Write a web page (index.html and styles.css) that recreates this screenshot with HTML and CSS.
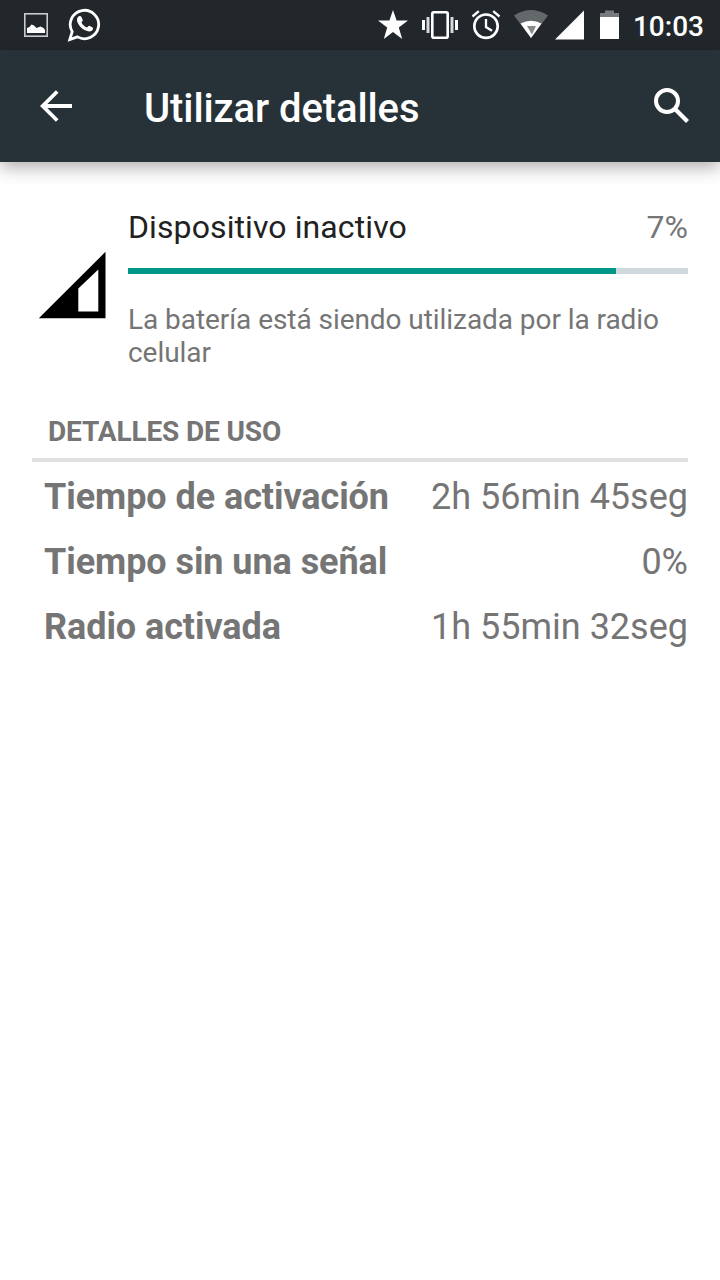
FILE: index.html
```html
<!DOCTYPE html>
<html lang="es">
<head>
    <meta charset="UTF-8">
    <meta name="viewport" content="width=device-width, initial-scale=1.0">
    <title>Utilizar detalles</title>
    <link rel="stylesheet" href="styles.css">
</head>
<body>
    <div class="status-bar">
        <div class="notifications">
            <svg width="24" height="50" viewBox="0 0 24 50">
                <rect x="0.8" y="13.8" width="22.4" height="22.4" fill="none" stroke="#c9cccb" stroke-width="1.6"/>
                <path d="M3 33v-5l2.500-1 2-2.500 2.500 1 2.500 2.500 4-1.500 3 1.500 1.500 2v3z" fill="#fff"/>
            </svg>
            <svg width="34" height="50" viewBox="0 0 34 50">
                <path d="M2.800 39.500l2.400-7.800A14.200 14.200 0 1 1 10.500 36.900z" fill="none" stroke="#fff" stroke-width="2.800"/>
                <path d="M10.800 17.200c1-1.400 2.900-1.600 3.500-.5l1.400 3c.4 1-.8 2-1.200 2.700 1.200 2.500 3.100 4 5.500 5.100.8-.7 1.500-2 2.400-1.700l3.200 1.600c1 .6.300 2.500-.8 3.300-1.800 1.300-4.200.8-6.700-.4-3.300-1.600-5.800-4.300-7.300-7.300-1-2-1.200-4.200 0-5.800z" fill="#fff"/>
            </svg>
        </div>
        <div class="system-icons">
            <svg class="star" width="30" height="50" viewBox="0 0 30 50">
                <path d="M15 10l3.600 10.500H30l-9.200 6.900L24.200 39 15 32 5.800 39l3.400-11.600L0 20.500h11.400z" fill="#fff"/>
            </svg>
            <svg class="vibrate" width="36" height="50" viewBox="0 0 36 50">
                <rect x="10.300" y="12.300" width="15.400" height="25.400" rx="1.500" fill="none" stroke="#fff" stroke-width="2.600"/>
                <path d="M0 20h3v10H0zM33 20h3v10h-3z" fill="#fff"/>
                <path d="M4.500 17h3v16h-3zM28.500 17h3v16h-3z" fill="#d6d8d9"/>
            </svg>
            <svg class="alarm" width="30" height="50" viewBox="0 0 30 50">
                <circle cx="15" cy="26.200" r="11.700" fill="none" stroke="#fff" stroke-width="2.600"/>
                <path d="M15 19v8l6 3.700M1.500 16.500l6.300-5.300M28.500 16.500l-6.300-5.300" fill="none" stroke="#fff" stroke-width="2.300"/>
            </svg>
            <svg class="wifi" width="34" height="50" viewBox="0 0 34 50">
                <path d="M0 15.500Q17 4.500 34 15.500L17 38z" fill="#63686b"/>
                <path d="M6.500 23.500q10.500-5.500 21 0L17 38z" fill="#fff"/>
                <path d="M13 26h9l-4 8.500z" fill="#85898b"/>
            </svg>
            <svg class="signal" width="30" height="50" viewBox="0 0 30 50">
                <path d="M0 39.500L29 10.500v29z" fill="#fff"/>
            </svg>
            <svg class="battery" width="19" height="50" viewBox="0 0 19 50">
                <path d="M5 10.500h9V13h5v5H0v-5h5z" fill="#777b7d"/>
                <path d="M0 17h19v22H0z" fill="#fff"/>
            </svg>
            <span class="clock">10:03</span>
        </div>
    </div>

    <header class="app-bar">
        <svg width="32" height="32" viewBox="0 0 32 32">
            <path d="M32 16H3M17.200 1.500L2.700 16l14.500 14.500" fill="none" stroke="#fff" stroke-width="3.800"/>
        </svg>
        <h1>Utilizar detalles</h1>
        <svg width="36" height="36" viewBox="0 0 36 36">
            <circle cx="13" cy="13" r="11" fill="none" stroke="#fff" stroke-width="4"/>
            <path d="M21.500 21.500l12 12" stroke="#fff" stroke-width="4.200"/>
        </svg>
    </header>

    <main>
        <section class="summary">
            <svg class="cell-icon" width="68" height="68" viewBox="0 0 68 68">
                <path d="M.8 67.300L67.500.8v66.500zM40.300 60.500h20V18.500L40.300 37.500z" fill="#000" fill-rule="evenodd"/>
            </svg>
            <div class="summary-info">
                <div class="summary-title">
                    <h2>Dispositivo inactivo</h2>
                    <span>7%</span>
                </div>
                <div class="progress">
                    <div class="progress-fill" style="width: 87.2%"></div>
                </div>
                <p>La batería está siendo utilizada por la radio celular</p>
            </div>
        </section>

        <section class="details">
            <h3>DETALLES DE USO</h3>
            <dl>
                <div class="row"><dt>Tiempo de activación</dt><dd>2h 56min 45seg</dd></div>
                <div class="row"><dt>Tiempo sin una señal</dt><dd>0%</dd></div>
                <div class="row"><dt>Radio activada</dt><dd>1h 55min 32seg</dd></div>
            </dl>
        </section>
    </main>
</body>
</html>
```
FILE: styles.css
```css
* {
    box-sizing: border-box;
}

body {
    margin: 0;
    min-height: 100vh;
    font-family: Roboto, sans-serif;
    background: #fff;
    color: #757575;
}

h1, h2, h3, p, dl, dt, dd {
    margin: 0;
}

svg {
    display: block;
    flex-shrink: 0;
}

/* Status bar */
.status-bar {
    display: flex;
    justify-content: space-between;
    height: 50px;
    padding: 0 16px 0 24px;
    background: #21272b;
}

.notifications,
.system-icons {
    display: flex;
}

.notifications {
    gap: 19px;
}

.star {
    margin-right: 14px;
}

.vibrate {
    margin-right: 13px;
}

.alarm {
    margin-right: 13px;
}

.wifi {
    margin-right: 7px;
}

.signal {
    margin-right: 15px;
}

.battery {
    margin-right: 14px;
}

.clock {
    font-size: 28px;
    font-weight: 500;
    line-height: 53px;
    color: #fff;
}

/* App bar */
.app-bar {
    display: flex;
    align-items: center;
    height: 112px;
    padding: 0 30px 0 40px;
    background: #263238;
    box-shadow: 0 6px 16px rgba(0, 0, 0, 0.3);
}

.app-bar h1 {
    flex: 1;
    padding: 6px 0 0 72px;
    font-size: 40px;
    font-weight: 500;
    letter-spacing: -0.1px;
    line-height: 48px;
    color: #fff;
}

main {
    padding: 46px 32px 0;
}

/* Battery use summary */
.summary {
    display: flex;
}

.cell-icon {
    margin: 43px 22px 0 6px;
}

.summary-info {
    flex: 1;
}

.summary-title {
    display: flex;
    justify-content: space-between;
    font-size: 32px;
    line-height: 38px;
}

.summary-title h2 {
    font-size: 32px;
    font-weight: 400;
    letter-spacing: 0.1px;
    color: #212121;
}

.progress {
    height: 6px;
    margin: 22px 0 29px;
    background: #cfd8dc;
}

.progress-fill {
    height: 100%;
    background: #009688;
}

.summary p {
    font-size: 28px;
    letter-spacing: -0.06px;
    line-height: 33px;
}

/* Usage details */
.details h3 {
    margin-top: 37px;
    padding: 8px 16px;
    border-bottom: 4px solid #e0e0e0;
    font-size: 28px;
    font-weight: 700;
    letter-spacing: -0.13px;
    line-height: 36px;
}

.details dl {
    padding: 3px 0 0 12px;
}

.row {
    display: flex;
    justify-content: space-between;
    font-size: 36px;
    line-height: 65px;
}

.row dt {
    font-weight: 700;
    letter-spacing: -0.07px;
}
```
